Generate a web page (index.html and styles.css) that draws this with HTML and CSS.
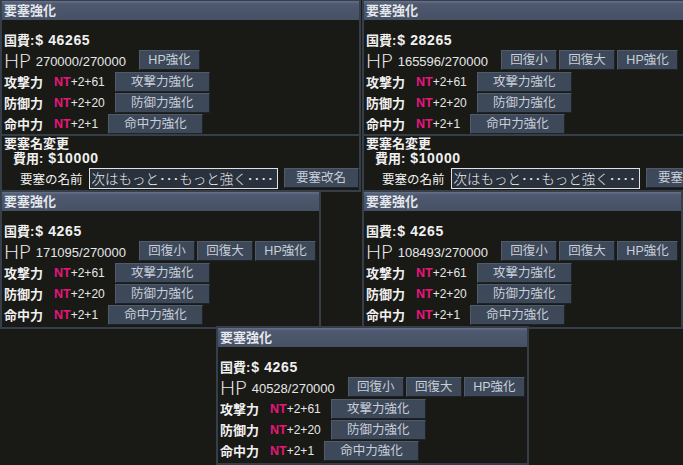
FILE: index.html
```html
<!DOCTYPE html>
<html lang="ja">
<head>
  <meta charset="UTF-8" />
  <title>要塞強化</title>
  <link rel="stylesheet" href="styles.css">
</head>
<body>
  <div class="desk">

    <section class="win win-a">
      <div class="win-title">要塞強化</div>
      <div class="win-body">
        <div class="funds">国費:<span class="cash">$ 46265</span></div>
        <div class="hp-row">
          <span class="hp-label">HP</span><span class="hp-num">270000/270000</span>
          <button class="btn btn-hp">HP強化</button>
        </div>
        <div class="stat-row first">
          <span class="stat-name">攻撃力</span><span class="nt">NT</span><span class="stat-val">+2+61</span>
          <button class="btn btn-stat">攻撃力強化</button>
        </div>
        <div class="stat-row">
          <span class="stat-name">防御力</span><span class="nt">NT</span><span class="stat-val">+2+20</span>
          <button class="btn btn-stat">防御力強化</button>
        </div>
        <div class="stat-row">
          <span class="stat-name">命中力</span><span class="nt">NT</span><span class="stat-val">+2+1</span>
          <button class="btn btn-stat">命中力強化</button>
        </div>
      </div>
    </section>

    <section class="win win-b">
      <div class="win-title">要塞強化</div>
      <div class="win-body">
        <div class="funds">国費:<span class="cash">$ 28265</span></div>
        <div class="hp-row">
          <span class="hp-label">HP</span><span class="hp-num">165596/270000</span>
          <button class="btn btn-heal">回復小</button>
          <button class="btn btn-heal">回復大</button>
          <button class="btn btn-hp">HP強化</button>
        </div>
        <div class="stat-row first">
          <span class="stat-name">攻撃力</span><span class="nt">NT</span><span class="stat-val">+2+61</span>
          <button class="btn btn-stat">攻撃力強化</button>
        </div>
        <div class="stat-row">
          <span class="stat-name">防御力</span><span class="nt">NT</span><span class="stat-val">+2+20</span>
          <button class="btn btn-stat">防御力強化</button>
        </div>
        <div class="stat-row">
          <span class="stat-name">命中力</span><span class="nt">NT</span><span class="stat-val">+2+1</span>
          <button class="btn btn-stat">命中力強化</button>
        </div>
      </div>
    </section>

    <section class="win rename rename-a">
      <div class="rename-title">要塞名変更</div>
      <div class="rename-cost">費用:<span class="cash">$10000</span></div>
      <div class="rename-row">
        <span class="rename-label">要塞の名前</span>
        <input class="name-input" type="text" value="次はもっと･･･もっと強く････">
        <button class="btn btn-rename">要塞改名</button>
      </div>
    </section>

    <section class="win rename rename-b">
      <div class="rename-title">要塞名変更</div>
      <div class="rename-cost">費用:<span class="cash">$10000</span></div>
      <div class="rename-row">
        <span class="rename-label">要塞の名前</span>
        <input class="name-input" type="text" value="次はもっと･･･もっと強く････">
        <button class="btn btn-rename">要塞改名</button>
      </div>
    </section>

    <section class="win win-c">
      <div class="win-title">要塞強化</div>
      <div class="win-body">
        <div class="funds">国費:<span class="cash">$ 4265</span></div>
        <div class="hp-row">
          <span class="hp-label">HP</span><span class="hp-num">171095/270000</span>
          <button class="btn btn-heal">回復小</button>
          <button class="btn btn-heal">回復大</button>
          <button class="btn btn-hp">HP強化</button>
        </div>
        <div class="stat-row first">
          <span class="stat-name">攻撃力</span><span class="nt">NT</span><span class="stat-val">+2+61</span>
          <button class="btn btn-stat">攻撃力強化</button>
        </div>
        <div class="stat-row">
          <span class="stat-name">防御力</span><span class="nt">NT</span><span class="stat-val">+2+20</span>
          <button class="btn btn-stat">防御力強化</button>
        </div>
        <div class="stat-row">
          <span class="stat-name">命中力</span><span class="nt">NT</span><span class="stat-val">+2+1</span>
          <button class="btn btn-stat">命中力強化</button>
        </div>
      </div>
    </section>

    <section class="win win-d">
      <div class="win-title">要塞強化</div>
      <div class="win-body">
        <div class="funds">国費:<span class="cash">$ 4265</span></div>
        <div class="hp-row">
          <span class="hp-label">HP</span><span class="hp-num">108493/270000</span>
          <button class="btn btn-heal">回復小</button>
          <button class="btn btn-heal">回復大</button>
          <button class="btn btn-hp">HP強化</button>
        </div>
        <div class="stat-row first">
          <span class="stat-name">攻撃力</span><span class="nt">NT</span><span class="stat-val">+2+61</span>
          <button class="btn btn-stat">攻撃力強化</button>
        </div>
        <div class="stat-row">
          <span class="stat-name">防御力</span><span class="nt">NT</span><span class="stat-val">+2+20</span>
          <button class="btn btn-stat">防御力強化</button>
        </div>
        <div class="stat-row">
          <span class="stat-name">命中力</span><span class="nt">NT</span><span class="stat-val">+2+1</span>
          <button class="btn btn-stat">命中力強化</button>
        </div>
      </div>
    </section>

    <section class="win win-e">
      <div class="win-title">要塞強化</div>
      <div class="win-body">
        <div class="funds">国費:<span class="cash">$ 4265</span></div>
        <div class="hp-row">
          <span class="hp-label">HP</span><span class="hp-num">40528/270000</span>
          <button class="btn btn-heal">回復小</button>
          <button class="btn btn-heal">回復大</button>
          <button class="btn btn-hp">HP強化</button>
        </div>
        <div class="stat-row first">
          <span class="stat-name">攻撃力</span><span class="nt">NT</span><span class="stat-val">+2+61</span>
          <button class="btn btn-stat">攻撃力強化</button>
        </div>
        <div class="stat-row">
          <span class="stat-name">防御力</span><span class="nt">NT</span><span class="stat-val">+2+20</span>
          <button class="btn btn-stat">防御力強化</button>
        </div>
        <div class="stat-row">
          <span class="stat-name">命中力</span><span class="nt">NT</span><span class="stat-val">+2+1</span>
          <button class="btn btn-stat">命中力強化</button>
        </div>
      </div>
    </section>

  </div>
</body>
</html>
```

FILE: styles.css
```css
:root {
  --fondo: #191a16;
  --borde: #363e4a;
  --texto: #f0f0f0;
  --boton: #3d4859;
  --boton-texto: #c8cfd9;
  --nt: #e8157a;
}

body {
  margin: 0;
  background: var(--fondo);
  color: var(--texto);
  font-family: "Liberation Sans", "Noto Sans CJK JP", sans-serif;
  font-size: 13px;
}

.desk {
  position: relative;
  width: 683px;
  height: 465px;
  overflow: hidden;
}

/* ventanas sobre el escritorio */
.win {
  position: absolute;
  box-sizing: border-box;
  border: 2px solid var(--borde);
  background: var(--fondo);
}

.win-a { left: 0; top: -1px; width: 361px; }
.win-b { left: 362px; top: -1px; width: 361px; }
.rename-a { left: 0; top: 134px; width: 361px; }
.rename-b { left: 362px; top: 134px; width: 361px; }
.win-c { left: 0; top: 190px; width: 321px; }
.win-d { left: 362px; top: 190px; width: 321px; }
.win-e { left: 216px; top: 326px; width: 313px; }

.win-title {
  height: 19px;
  line-height: 19px;
  padding-left: 2px;
  font-weight: bold;
  color: #e4e7ec;
  background: linear-gradient(#66718a 0, #4e596f 3px, #465166 100%);
}

.win-body {
  padding: 12px 2px 2px 2px;
}

.funds {
  height: 17px;
  line-height: 17px;
  font-weight: bold;
}

.cash {
  font-size: 14px;
  letter-spacing: 0.6px;
  margin-left: 1px;
}

.hp-row,
.stat-row,
.rename-row {
  display: flex;
  align-items: center;
  white-space: nowrap;
}

.hp-row > *,
.stat-row > *,
.rename-row > * {
  flex-shrink: 0;
}

.hp-row {
  height: 21px;
}

.hp-label {
  font-family: "Lato", "Open Sans", sans-serif;
  font-weight: 300;
  font-size: 20px;
  line-height: 20px;
  margin-top: 1px;
}

.hp-num {
  margin-left: 5px;
  margin-right: 11px;
  margin-top: 4px;
  color: #e6e6e6;
}

.stat-row {
  height: 21px;
}

.stat-row.first {
  margin-top: 1px;
}

.stat-name {
  font-weight: bold;
  margin-right: 11px;
}

.nt {
  color: var(--nt);
  font-weight: bold;
  font-size: 12.5px;
}

.stat-val {
  font-size: 12px;
  color: #e6e6e6;
  margin-right: 10px;
}

.btn {
  box-sizing: border-box;
  height: 20px;
  padding: 0;
  border: 1px solid;
  border-color: #4f5b6c #1e232a #1e232a #4f5b6c;
  background: var(--boton);
  color: var(--boton-texto);
  font-family: "Liberation Sans", "Noto Sans CJK JP", sans-serif;
  font-size: 12.5px;
  line-height: 18px;
  text-align: center;
}

.btn-heal { width: 56px; margin-left: 2px; }
.btn-hp { width: 61px; margin-left: 2px; }
.btn-stat { width: 95px; }
.btn-rename { width: 75px; }

/* cambio de nombre */
.rename {
  padding: 1px 2px 1px 2px;
}

.rename-title {
  font-weight: bold;
  line-height: 14px;
}

.rename-cost {
  font-weight: bold;
  line-height: 14px;
  padding-left: 9px;
}

.rename-cost .cash {
  margin-left: 5px;
}

.rename-row {
  gap: 6px;
  margin-top: 1px;
  padding-left: 16px;
  height: 22px;
}

.rename-label {
  font-size: 12.5px;
}

.name-input {
  box-sizing: border-box;
  width: 189px;
  height: 21px;
  margin: 0;
  padding: 0 2px;
  border: 1px solid #e2e2e2;
  background: #29313c;
  color: #ececec;
  font-family: "Noto Sans CJK JP", sans-serif;
  font-weight: 300;
  font-size: 13.5px;
  outline: none;
}
```
